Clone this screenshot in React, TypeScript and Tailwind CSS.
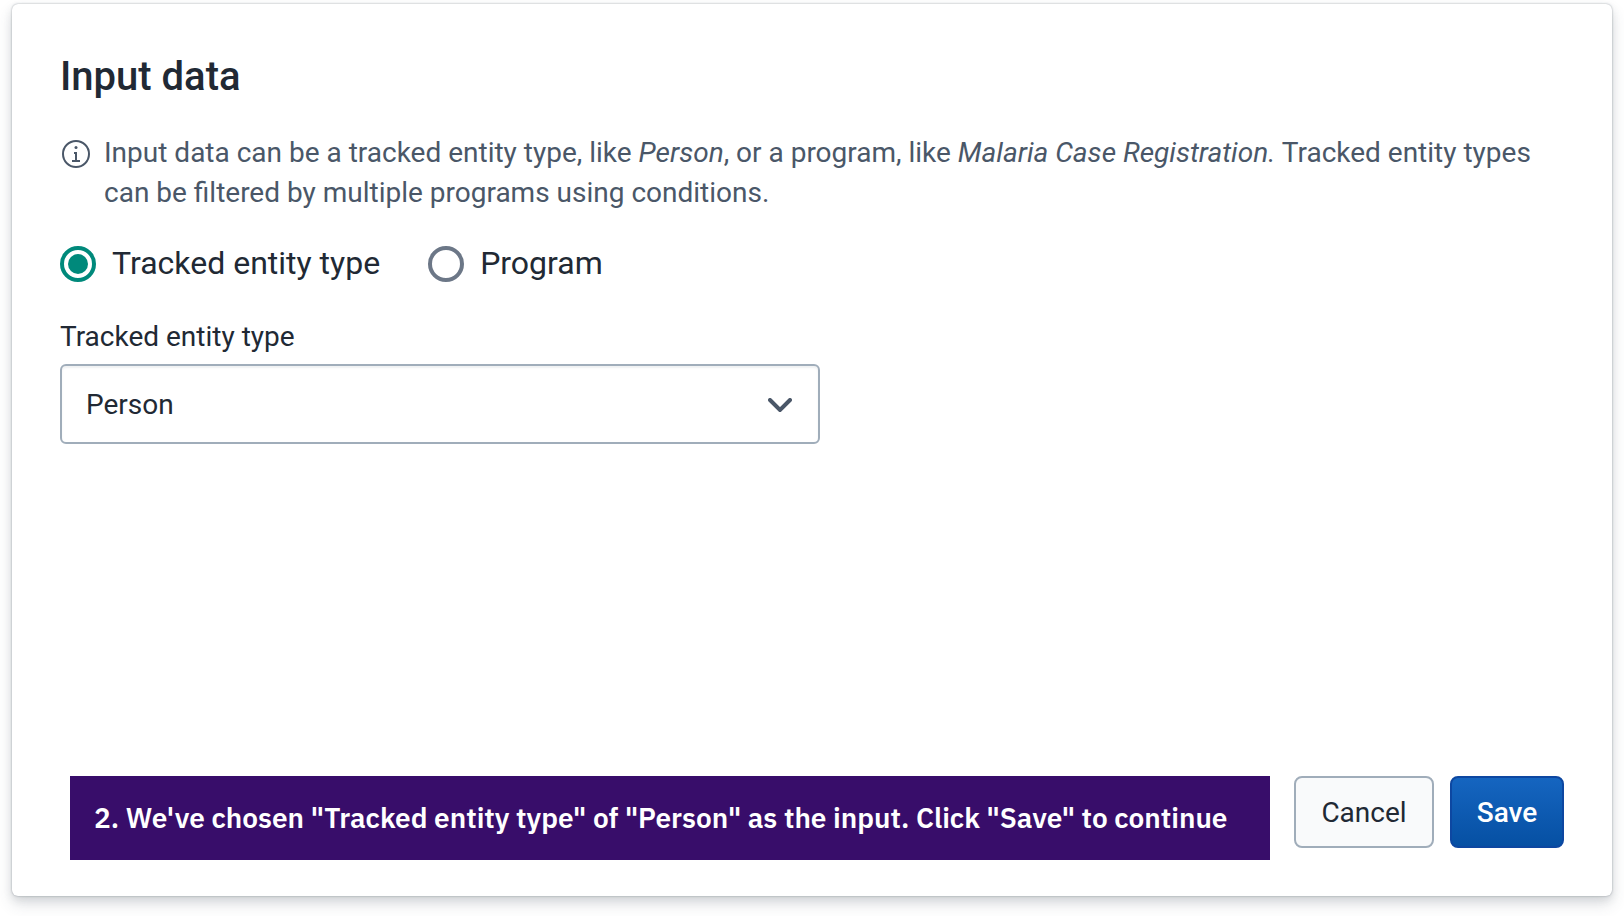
import { useState } from "react";

type InputType = "tracked-entity" | "program";

function InfoIcon() {
  return (
    <svg viewBox="0 0 32 32" className="mt-[5px] size-8 shrink-0" fill="none" stroke="#4a5768" strokeWidth="2" aria-hidden="true">
      <circle cx="16" cy="16" r="13" />
      <path d="M14 15h2v8M12 23h8" />
      <circle cx="16" cy="9.5" r="1.5" fill="#4a5768" stroke="none" />
    </svg>
  );
}

function RadioOption({
  label,
  checked,
  onChange,
}: {
  label: string;
  checked: boolean;
  onChange: () => void;
}) {
  return (
    <label className="flex h-9 items-center gap-4 text-[32px] leading-8 text-[#212934]">
      <span className="grid size-9 shrink-0 place-items-center">
        <input
          type="radio"
          name="input-type"
          checked={checked}
          onChange={onChange}
          className="col-start-1 row-start-1 size-9 appearance-none rounded-full border-4 border-[#6c7787] bg-white checked:border-[#00897b]"
        />
        {checked && <span className="pointer-events-none col-start-1 row-start-1 size-5 rounded-full bg-[#00897b]" />}
      </span>
      <span className="pb-0.5">{label}</span>
    </label>
  );
}

export default function App() {
  const [inputType, setInputType] = useState<InputType>("tracked-entity");

  return (
    <div className="flex min-h-screen flex-col bg-white px-3 pt-1 pb-5 font-[Roboto,sans-serif] text-[#212934]">
      <main className="flex flex-1 flex-col rounded-md bg-white px-12 pt-[49px] pb-9 shadow-[0_0_2px_rgba(64,75,90,0.5),0_4px_8px_rgba(64,75,90,0.12),0_8px_16px_rgba(64,75,90,0.16)]">
        <h1 className="text-[40px] leading-12 font-medium">Input data</h1>

        <div className="mt-8 flex gap-3 text-[28px] leading-10 text-[#4a5768]">
          <InfoIcon />
          <p>
            Input data can be a tracked entity type, like <em>Person</em>, or a program, like{" "}
            <em>Malaria Case Registration.</em> Tracked entity types can be filtered by multiple programs using
            conditions.
          </p>
        </div>

        <div className="mt-[33px] flex gap-12" role="radiogroup" aria-label="Input data">
          <RadioOption
            label="Tracked entity type"
            checked={inputType === "tracked-entity"}
            onChange={() => setInputType("tracked-entity")}
          />
          <RadioOption label="Program" checked={inputType === "program"} onChange={() => setInputType("program")} />
        </div>

        <div className="mt-[35px] flex w-full max-w-[760px] flex-col gap-[7px] text-[28px]">
          <label htmlFor="entity" className="leading-10">
            Tracked entity type
          </label>
          <div className="relative">
            <select
              id="entity"
              className="h-20 w-full appearance-none rounded-md border-2 border-[#a0adba] bg-white pt-0.5 pr-16 pl-6 shadow-[inset_0_2px_2px_rgba(102,113,123,0.1)]"
            >
              <option>Person</option>
            </select>
            <svg
              viewBox="0 0 24 14"
              className="pointer-events-none absolute top-[34px] right-7 h-3.5 w-6"
              fill="none"
              stroke="#4a5768"
              strokeWidth="4"
              strokeLinecap="round"
              aria-hidden="true"
            >
              <path d="M2 2l10 10L22 2" />
            </svg>
          </div>
        </div>

        <footer className="mt-auto flex items-start gap-4 text-[28px]">
          <p className="mr-2 ml-2.5 flex-1 bg-[#380d6a] px-6 py-[22px] font-['IBM_Plex_Sans','Open_Sans',sans-serif] leading-10 font-semibold text-white">
            2. We've chosen "Tracked entity type" of "Person" as the input. Click "Save" to continue
          </p>
          <button type="button" className="h-18 w-35 shrink-0 rounded-lg border-2 border-[#a0adba] bg-[#f9fafb] pt-0.5">
            Cancel
          </button>
          <button
            type="button"
            className="h-18 w-[114px] shrink-0 rounded-lg border-2 border-[#0d47a1] bg-linear-to-b from-[#1565c0] to-[#0650a3] pt-0.5 font-medium text-white"
          >
            Save
          </button>
        </footer>
      </main>
    </div>
  );
}
